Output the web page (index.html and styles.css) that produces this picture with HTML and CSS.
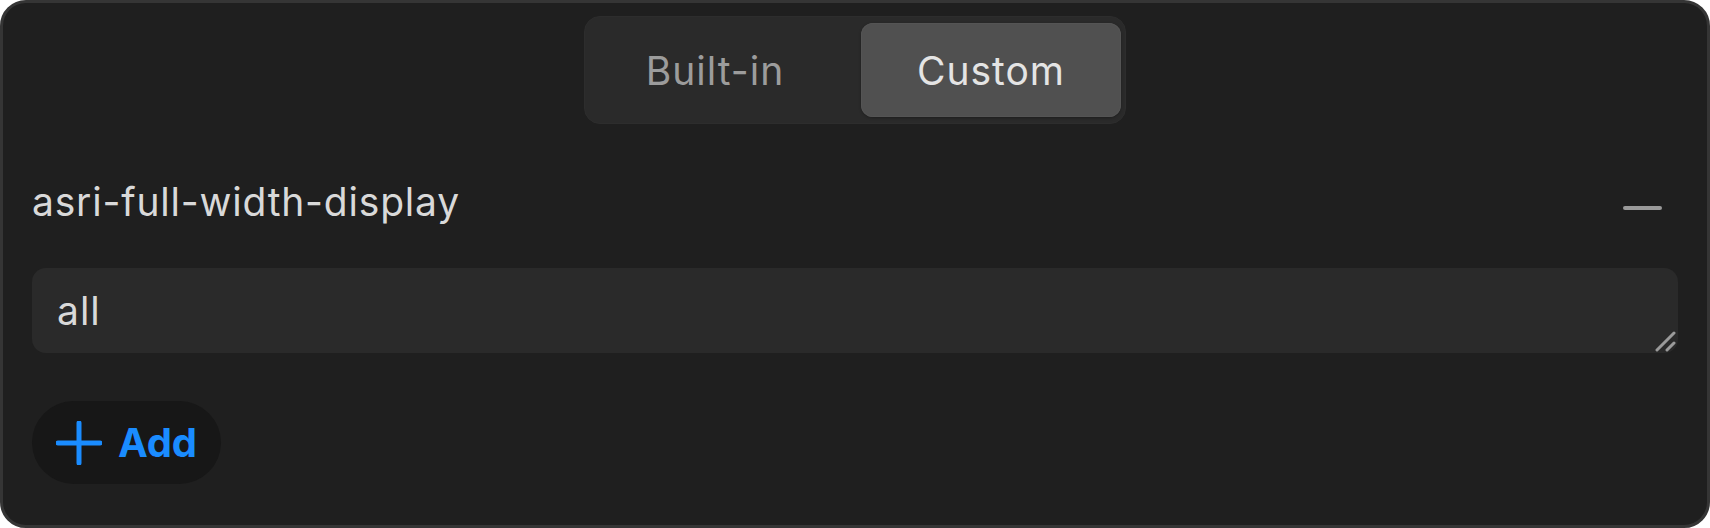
FILE: index.html
```html
<!DOCTYPE html>
<html>
<head>
<meta charset="utf-8">
<link rel="stylesheet" href="styles.css">
</head>
<body>
<div class="panel">
  <div class="seg">
    <div class="tab first">Built-in</div>
    <div class="tab active">Custom</div>
  </div>
  <div class="row">
    <div class="label">asri-full-width-display</div>
    <div class="minus"></div>
  </div>
  <div class="input">
    <span class="value">all</span>
    <svg class="grip" width="22" height="22" viewBox="0 0 22 22">
      <line x1="2" y1="20" x2="19" y2="3" stroke="#9a9a9a" stroke-width="3" stroke-linecap="round"/>
      <line x1="12" y1="20" x2="19" y2="13" stroke="#9a9a9a" stroke-width="3" stroke-linecap="round"/>
    </svg>
  </div>
  <div class="add">
    <svg class="plus" width="46" height="44" viewBox="0 0 46 44">
      <path d="M23 2 L23 42 M2 22 L44 22" stroke="#1a8cff" stroke-width="5" stroke-linecap="round" fill="none"/>
    </svg>
    <span class="add-text">Add</span>
  </div>
</div>
</body>
</html>
```

FILE: styles.css
```css
html, body {
  margin: 0;
  padding: 0;
  background: #ffffff;
}
body {
  font-family: Inter, "Noto Sans", sans-serif;
}
.panel {
  width: 1710px;
  height: 528px;
  box-sizing: border-box;
  border: 3px solid #353535;
  border-radius: 26px;
  background: #1f1f1f;
  padding: 13px 29px 0 29px;
  display: flex;
  flex-direction: column;
}
.seg {
  align-self: center;
  width: 542px;
  height: 108px;
  box-sizing: border-box;
  padding: 6px 5px;
  background: #2a2a2a;
  border: 1px solid #2d2d2d;
  border-radius: 16px;
  display: flex;
  gap: 11px;
}
.tab {
  flex: 0 0 260px;
  box-sizing: border-box;
  display: flex;
  align-items: center;
  justify-content: center;
  font-size: 39px;
  color: #9c9c9c;
  border-radius: 12px;
  letter-spacing: 1px;
}
.tab.first {
  padding-right: 10px;
}
.tab.active {
  background: #505050;
  color: #e4e4e4;
  box-shadow: 0 0 0 1px #545454 inset, 0 1px 3px rgba(0,0,0,0.3);
}
.row {
  margin-top: 55px;
  display: flex;
  justify-content: space-between;
  align-items: flex-start;
}
.label {
  font-size: 39px;
  line-height: 46px;
  color: #d9d9d9;
  letter-spacing: 0.8px;
}
.minus {
  width: 39px;
  height: 4px;
  border-radius: 2px;
  background: #9a9a9a;
  margin-top: 27px;
  margin-right: 16px;
}
.input {
  position: relative;
  margin-top: 43px;
  height: 85px;
  box-sizing: border-box;
  padding: 20px 25px 0;
  background: #2a2a2a;
  border-radius: 14px;
}
.value {
  font-size: 39px;
  line-height: 46px;
  color: #d9d9d9;
  letter-spacing: 1px;
}
.grip {
  position: absolute;
  right: 1px;
  bottom: 1px;
}
.add {
  margin-top: 48px;
  align-self: flex-start;
  height: 83px;
  box-sizing: border-box;
  padding: 0 24px 0 24px;
  border-radius: 42px;
  background: #171717;
  display: flex;
  align-items: center;
  gap: 16px;
}
.add-text {
  font-size: 40px;
  font-weight: 700;
  color: #1a8cff;
  letter-spacing: -0.2px;
}
```
